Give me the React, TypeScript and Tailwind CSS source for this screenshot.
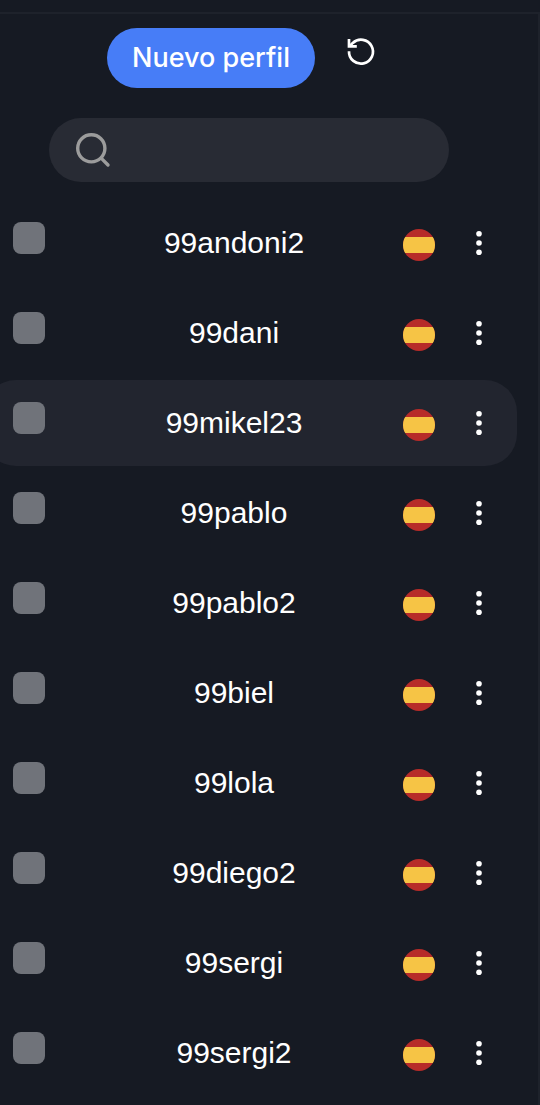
const profiles = [
  "99andoni2",
  "99dani",
  "99mikel23",
  "99pablo",
  "99pablo2",
  "99biel",
  "99lola",
  "99diego2",
  "99sergi",
  "99sergi2",
];

const activeProfile = "99mikel23";

function ReloadIcon() {
  return (
    <svg className="size-8" viewBox="0 0 32 32" fill="none" stroke="currentColor" strokeWidth="2.7">
      <path d="M4 15.2A12 12 0 1 0 7.8 6.9L4.6 10.2" />
      <path d="M4 3V10.4H11.8" />
    </svg>
  );
}

function SearchIcon() {
  return (
    <svg
      className="size-9 shrink-0 text-[#9c9c9c]"
      viewBox="0 0 36 36"
      fill="none"
      stroke="currentColor"
      strokeWidth="3.4"
      strokeLinecap="round"
    >
      <circle cx="16.3" cy="16.3" r="13.6" />
      <path d="M26.4 26.4L33 33" />
    </svg>
  );
}

function SpainFlag() {
  return (
    <div className="mt-1 flex size-8 flex-col overflow-hidden rounded-full bg-[#b72b29]">
      <div className="my-2 h-4 bg-[#f6c445]"></div>
    </div>
  );
}

function DotsIcon() {
  return (
    <svg className="h-8 w-4" viewBox="0 0 16 32" fill="currentColor">
      <circle cx="8" cy="6.7" r="2.8" />
      <circle cx="8" cy="16" r="2.8" />
      <circle cx="8" cy="25.3" r="2.8" />
    </svg>
  );
}

function ProfileRow({ name, active }: { name: string; active: boolean }) {
  return (
    <li
      className={`flex h-[86px] items-center rounded-[32px] pr-[30px] pl-[29px] ${active ? "bg-[#22252f]" : ""}`}
    >
      <input
        type="checkbox"
        id={name}
        className="mb-[10px] size-8 shrink-0 appearance-none rounded-lg bg-[#70737a] checked:bg-[#477df7]"
      />
      <label htmlFor={name} className="ml-5 flex-1 text-center text-[30px] leading-10">
        {name}
      </label>
      <SpainFlag />
      <button type="button" aria-label="Opciones" className="ml-9">
        <DotsIcon />
      </button>
    </li>
  );
}

function App() {
  return (
    <div className="min-h-screen overflow-hidden bg-[#161a23] pt-3 font-['Liberation_Sans',Arial,sans-serif] text-white">
      <main className="min-h-[1093px] border-t-2 border-[#1e222b]">
        <div className="border-r-2 border-[#1e222b] pt-[14px] pb-[9px]">
          <div className="flex items-start justify-center gap-[30px] pr-[54px]">
            <button
              type="button"
              className="h-[60px] w-52 rounded-full bg-[#477df7] font-['Inter',sans-serif] text-[27px] leading-10 font-medium"
            >
              Nuevo perfil
            </button>
            <button type="button" aria-label="Recargar" className="mt-2">
              <ReloadIcon />
            </button>
          </div>

          <div className="mt-[30px] mr-[89px] ml-[49px] flex h-16 items-center rounded-full bg-[#282b34] px-[26px]">
            <label htmlFor="search" aria-label="Buscar">
              <SearchIcon />
            </label>
            <input id="search" type="text" className="ml-4 min-w-0 flex-1 bg-transparent text-[28px] outline-none" />
          </div>

          <ul className="mt-[18px] mr-[21px] -ml-4 flex flex-col gap-1">
            {profiles.map((name) => (
              <ProfileRow key={name} name={name} active={name === activeProfile} />
            ))}
          </ul>
        </div>
      </main>
    </div>
  );
}

export default App;
